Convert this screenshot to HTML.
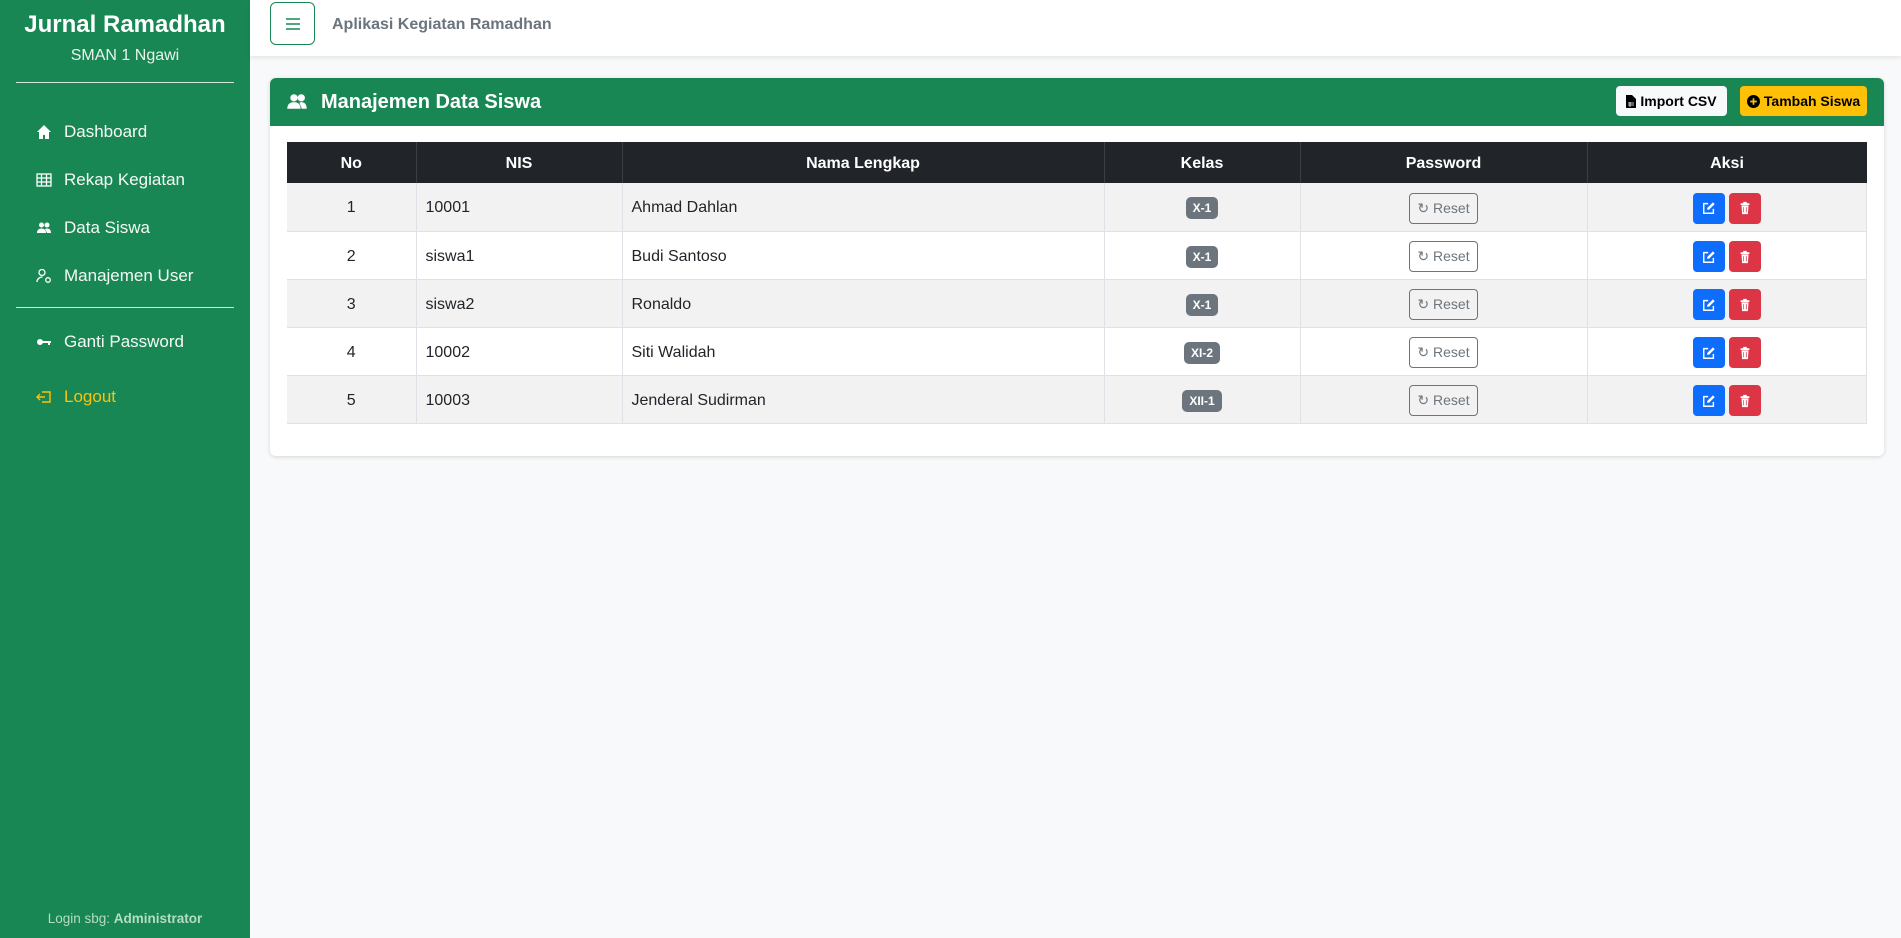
<!DOCTYPE html>
<html><head><meta charset="utf-8"><style>
*{box-sizing:border-box;margin:0;padding:0}
body{width:1901px;height:938px;overflow:hidden;background:#f8f9fa;font-family:"Liberation Sans",sans-serif;color:#212529;position:relative}
.side{position:absolute;left:0;top:0;width:250px;height:938px;background:#198754;color:#fff}
.side h1{position:absolute;top:11px;width:250px;text-align:center;font-size:24px;font-weight:bold}
.side .sub{position:absolute;top:47px;width:250px;text-align:center;font-size:16px;color:#e8f3ec}
.side hr{position:absolute;left:16px;width:218px;border:0;border-top:1px solid rgba(255,255,255,.8)}
.nav{position:absolute;left:36px;font-size:17px;display:flex;align-items:center;color:#f4faf6}
.nav svg{width:16px;height:16px;margin-right:12px}
.login{position:absolute;top:911px;width:250px;text-align:center;font-size:13.5px;color:#b5dcc4}
.top{position:absolute;left:250px;top:0;right:0;height:56px;background:#fff;box-shadow:0 2px 4px rgba(0,0,0,.08)}
.tog{position:absolute;left:20px;top:2px;width:45px;height:43px;border:1px solid #198754;border-radius:6px;display:flex;align-items:center;justify-content:center}
.top .t{position:absolute;left:82px;top:16px;font-size:16px;font-weight:bold;color:#6c757d}
.card{position:absolute;left:270px;top:78px;width:1614px;height:378px;background:#fff;border-radius:6px;box-shadow:0 1px 4px rgba(0,0,0,.15);overflow:hidden}
.ch{height:48px;background:#198754;color:#fff;position:relative}
.ch .tt{position:absolute;left:51px;top:13px;font-size:20px;font-weight:bold}
.btn{position:absolute;top:8px;height:30px;border-radius:4px;font-size:14px;font-weight:bold;color:#000;display:flex;align-items:center;justify-content:center;gap:4px}
table{position:absolute;left:17px;top:64px;width:1580px;border-collapse:collapse;font-size:16px}
th{background:#212529;color:#fff;height:41px;font-weight:bold;border-right:1px solid #3a3f44;padding-top:3px}
td{height:48px;border-bottom:1px solid #dee2e6;border-right:1px solid #dee2e6;padding-top:3px}
tr:nth-child(even) td{background:#f2f2f2}
.c{text-align:center}.l{padding-left:9px}
.bd{display:inline-block;background:#6c757d;color:#fff;font-size:12px;font-weight:bold;padding:4px 7px;border-radius:5px}
.rs{display:inline-flex;align-items:center;gap:4px;border:1px solid #6c757d;border-radius:4px;height:31px;width:69px;justify-content:center;color:#6c757d;font-size:14px}
.ab{display:inline-flex;align-items:center;justify-content:center;width:32px;height:31px;border-radius:4px;vertical-align:middle;margin:0 2px}
.e{background:#0d6efd}.d{background:#dc3545}
</style></head><body>
<svg width="0" height="0" style="position:absolute"><defs>
<symbol id="ed" viewBox="0 0 16 16"><path d="M13 9v5H2V3h5" fill="none" stroke="#fff" stroke-width="1.6"/><path d="M12.5 1.5l2 2L8 10H6V8z" fill="#fff"/></symbol>
<symbol id="tr" viewBox="0 0 16 16"><path d="M3 2.5h10v2H3zM6 1h4v2H6z" fill="#fff"/><path d="M4 5h8l-.7 10H4.7z" fill="#fff"/><path d="M6.5 7v6M9.5 7v6" stroke="#dc3545" stroke-width=".8"/></symbol>
</defs></svg>
<div class="side">
<h1>Jurnal Ramadhan</h1>
<div class="sub">SMAN 1 Ngawi</div>
<hr style="top:82px">
<div class="nav" style="top:122px"><svg viewBox="0 0 16 16"><path d="M8 1L1 8h2v7h4v-4h2v4h4V8h2z" fill="#fff"/></svg>Dashboard</div>
<div class="nav" style="top:170px"><svg viewBox="0 0 16 16" fill="none" stroke="#fff" stroke-width="1.3"><rect x="1" y="2" width="14" height="12"/><path d="M1 6h14M1 10h14M5.5 2v12M10.5 2v12"/></svg>Rekap Kegiatan</div>
<div class="nav" style="top:218px"><svg viewBox="0 0 16 16" fill="#fff"><circle cx="5.5" cy="5" r="2.5"/><circle cx="11" cy="5" r="2.5"/><path d="M1 13c0-3 2-4.5 4.5-4.5S10 10 10 13zM9 9c1-.5 1.5-.5 2-.5 2.5 0 4 1.5 4 4.5h-4"/></svg>Data Siswa</div>
<div class="nav" style="top:266px"><svg viewBox="0 0 16 16" fill="none" stroke="#fff" stroke-width="1.3"><circle cx="6" cy="4.5" r="3"/><path d="M1 14c0-3 2.5-5 5.5-5"/><circle cx="12" cy="12" r="2.3"/></svg>Manajemen User</div>
<hr style="top:307px">
<div class="nav" style="top:332px"><svg viewBox="0 0 16 16" fill="#fff"><circle cx="4" cy="8" r="3"/><rect x="6" y="7" width="9" height="2"/><rect x="12" y="8" width="2" height="3"/></svg>Ganti Password</div>
<div class="nav" style="top:387px;color:#ffc107"><svg viewBox="0 0 16 16" fill="none" stroke="#ffc107" stroke-width="1.4"><path d="M6 3h8v10H6M9 8H1M4 5L1 8l3 3"/></svg>Logout</div>
<div class="login">Login sbg: <b>Administrator</b></div>
</div>
<div class="top">
<div class="tog"><svg width="16" height="14" viewBox="0 0 16 14" stroke="#198754" stroke-width="1.5"><path d="M1 2h14M1 7h14M1 12h14"/></svg></div>
<div class="t">Aplikasi Kegiatan Ramadhan</div>
</div>
<div class="card">
<div class="ch">
<svg style="position:absolute;left:17px;top:15px" width="20" height="17" viewBox="0 0 16 14" fill="#fff"><circle cx="5.5" cy="4" r="3"/><circle cx="11.5" cy="4" r="3"/><path d="M0 13c0-4 2.5-5.5 5.5-5.5S11 9 11 13zM10 8c.5-.3 1-.5 1.5-.5 3 0 4.5 2 4.5 5.5h-4"/></svg>
<div class="tt">Manajemen Data Siswa</div>
<div class="btn" style="left:1346px;width:111px;background:#f8f9fa"><svg width="10" height="13" viewBox="0 0 10 13"><path d="M0 0h6l4 4v9H0z" fill="#000"/><path d="M2 8h6M2 10h6M4 7v5" stroke="#fff" stroke-width=".8"/></svg>Import CSV</div>
<div class="btn" style="left:1470px;width:127px;background:#ffc107"><svg width="13" height="13" viewBox="0 0 14 14"><circle cx="7" cy="7" r="7"/><path d="M7 3.5v7M3.5 7h7" stroke="#ffc107" stroke-width="1.8"/></svg>Tambah Siswa</div>
</div>
<table>
<tr><th style="width:129px">No</th><th style="width:206px">NIS</th><th style="width:482px">Nama Lengkap</th><th style="width:196px">Kelas</th><th style="width:287px">Password</th><th style="border-right:0">Aksi</th></tr>
<tr><td class="c">1</td><td class="l">10001</td><td class="l">Ahmad Dahlan</td><td class="c"><span class="bd">X-1</span></td><td class="c"><span class="rs">↻ Reset</span></td><td class="c"><span class="ab e"><svg width="14" height="14"><use href="#ed"/></svg></span><span class="ab d"><svg width="14" height="14"><use href="#tr"/></svg></span></td></tr>
<tr><td class="c">2</td><td class="l">siswa1</td><td class="l">Budi Santoso</td><td class="c"><span class="bd">X-1</span></td><td class="c"><span class="rs">↻ Reset</span></td><td class="c"><span class="ab e"><svg width="14" height="14"><use href="#ed"/></svg></span><span class="ab d"><svg width="14" height="14"><use href="#tr"/></svg></span></td></tr>
<tr><td class="c">3</td><td class="l">siswa2</td><td class="l">Ronaldo</td><td class="c"><span class="bd">X-1</span></td><td class="c"><span class="rs">↻ Reset</span></td><td class="c"><span class="ab e"><svg width="14" height="14"><use href="#ed"/></svg></span><span class="ab d"><svg width="14" height="14"><use href="#tr"/></svg></span></td></tr>
<tr><td class="c">4</td><td class="l">10002</td><td class="l">Siti Walidah</td><td class="c"><span class="bd">XI-2</span></td><td class="c"><span class="rs">↻ Reset</span></td><td class="c"><span class="ab e"><svg width="14" height="14"><use href="#ed"/></svg></span><span class="ab d"><svg width="14" height="14"><use href="#tr"/></svg></span></td></tr>
<tr><td class="c">5</td><td class="l">10003</td><td class="l">Jenderal Sudirman</td><td class="c"><span class="bd">XII-1</span></td><td class="c"><span class="rs">↻ Reset</span></td><td class="c"><span class="ab e"><svg width="14" height="14"><use href="#ed"/></svg></span><span class="ab d"><svg width="14" height="14"><use href="#tr"/></svg></span></td></tr>
</table>
</div>
</body></html>
